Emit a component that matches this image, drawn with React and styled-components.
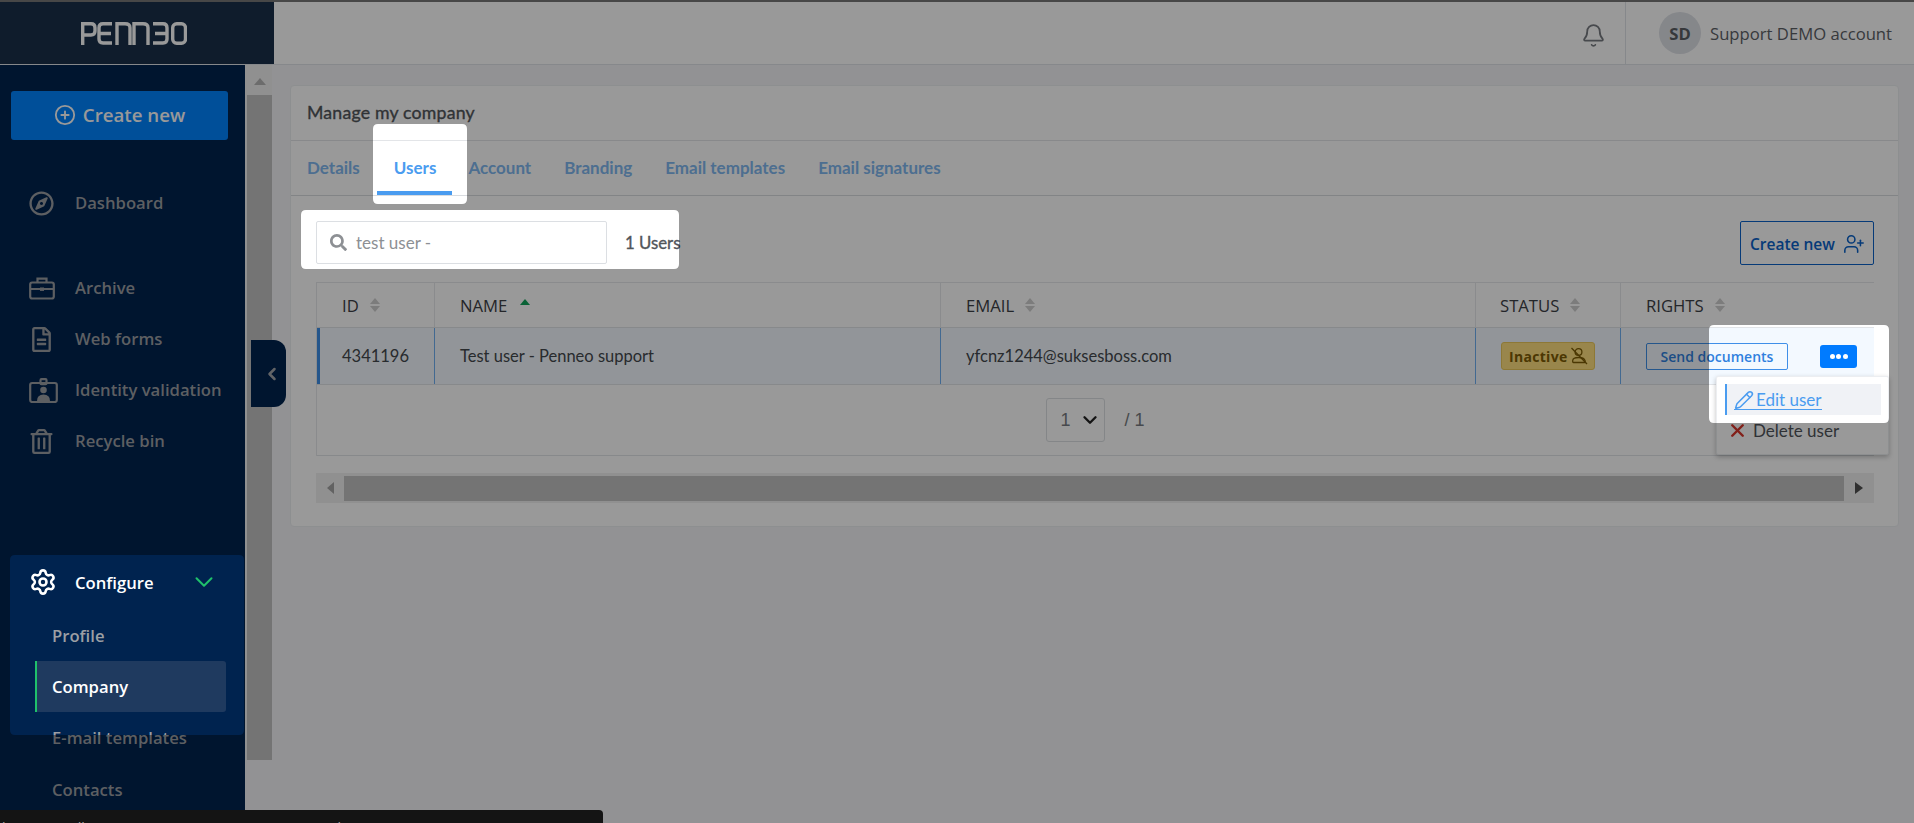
import React from 'react';
import styled, { createGlobalStyle } from 'styled-components';
import {
  Bell, Settings, ChevronDown, ChevronLeft, CirclePlus, UserPlus, Pencil, X,
} from 'lucide-react';
import { FaRegCompass, FaRegFileAlt, FaRegTrashAlt, FaSearch } from 'react-icons/fa';

const GlobalStyle = createGlobalStyle`
  html, body { margin: 0; padding: 0; height: 100%; overflow: hidden; }
  body { font-family: 'Open Sans', 'Liberation Sans', sans-serif; background: #f3f4f7; }
  * { box-sizing: border-box; }
`;

const LATO = `'Lato', 'Liberation Sans', sans-serif`;

// holes of the guided tour overlay: x, y, w, h
const HOLES = [
  [373, 124, 94, 80],
  [301, 210, 378, 59],
  [1709, 325, 180, 98],
  [10, 555, 234, 180],
];

const holePath = ([x, y, w, h], r = 5) =>
  `M${x + r} ${y}H${x + w - r}Q${x + w} ${y} ${x + w} ${y + r}V${y + h - r}Q${x + w} ${y + h} ${x + w - r} ${y + h}H${x + r}Q${x} ${y + h} ${x} ${y + h - r}V${y + r}Q${x} ${y} ${x + r} ${y}Z`;

const Page = styled.div`
  position: relative;
  width: 1914px;
  height: 823px;
  overflow: hidden;
  display: flex;
  flex-direction: column;
  border-top: 2px solid #474747;
`;

const Dim = styled.div`
  position: absolute;
  inset: -2px 0 0 0;
  background: rgba(0, 0, 0, 0.4);
  clip-path: path(evenodd, 'M0 0H1914V823H0Z ${HOLES.map((h) => holePath(h)).join(' ')}');
  z-index: 10;
`;

const Header = styled.header`
  flex: 0 0 63px;
  display: flex;
  align-items: stretch;
  background: #fff;
  border-bottom: 1px solid #dfe3e8;
`;

const LogoCell = styled.div`
  width: 274px;
  display: flex;
  align-items: center;
  justify-content: center;
  padding-right: 6px;
  background: #19304a;
`;

const HeaderSpacer = styled.div`
  flex: 1;
`;

const BellCell = styled.div`
  width: 64px;
  display: flex;
  align-items: center;
  justify-content: center;
  color: #777b80;
  padding-top: 4px;
  border-right: 1px solid #dfe3e8;
`;

const Account = styled.div`
  display: flex;
  align-items: center;
  gap: 9px;
  width: 288px;
  padding-left: 33px;
  font-size: 16.66px;
  color: #5d6166;
`;

const Avatar = styled.div`
  width: 42px;
  height: 42px;
  border-radius: 50%;
  background: #dee1e7;
  display: flex;
  align-items: center;
  justify-content: center;
  font-weight: 700;
  font-size: 16.66px;
  color: #5a5e63;
`;

const Body = styled.div`
  flex: 1;
  display: flex;
  min-height: 0;
`;

const Sidebar = styled.nav`
  width: 245px;
  flex: none;
  background: #00234f;
  padding-top: 26px;
  overflow: hidden;
`;

const CreateButton = styled.button`
  display: flex;
  align-items: center;
  justify-content: center;
  gap: 7px;
  width: 217px;
  height: 49px;
  margin-left: 11px;
  padding: 0 0 2px;
  border: 0;
  border-radius: 3px;
  background: #0084ff;
  color: #fff;
  font: 600 18.7px 'Open Sans', sans-serif;
`;

const NavGroup = styled.div`
  margin-top: ${(p) => p.$top}px;
`;

const NavItem = styled.div`
  display: flex;
  align-items: center;
  height: 51px;
  padding: 0 0 2px 29px;
  font-size: 16.66px;
  font-weight: 600;
  color: #9c9fa4;
`;

const NavIcon = styled.span`
  width: 46px;
  flex: none;
  display: flex;
  align-items: center;
  padding-top: 1px;
`;

const ConfigureBox = styled.div`
  margin: 88px 0 0 10px;
  padding-top: 3px;
`;

const ConfigureHead = styled.div`
  display: flex;
  align-items: center;
  height: 52px;
  padding: 0 0 4px 19px;
  font-size: 16.66px;
  font-weight: 600;
  color: #fff;
`;

const ConfigureIcon = styled.span`
  width: 46px;
  display: flex;
  align-items: center;
`;

const ConfigureChevron = styled.span`
  display: flex;
  margin-left: 35px;
  color: #1fc16b;
`;

const SubItem = styled.div`
  display: flex;
  align-items: center;
  height: ${(p) => p.$height || 52}px;
  margin-left: ${(p) => (p.$outer ? 35 : 25)}px;
  width: 191px;
  padding: 0 0 ${(p) => (p.$outer ? 2 : 0)}px ${(p) => (p.$active ? 15 : 17)}px;
  font-size: 16.66px;
  font-weight: 600;
  color: ${(p) => (p.$active ? '#fff' : '#9c9fa4')};
  background: ${(p) => (p.$active ? '#1f3a5f' : 'transparent')};
  border-left: ${(p) => (p.$active ? '2px solid #1fc16b' : '0')};
  border-radius: 0 3px 3px 0;
`;

const Main = styled.main`
  flex: 1;
  display: flex;
  min-width: 0;
  background: #f3f4f7;
`;

const VScroll = styled.div`
  width: 27px;
  flex: none;
  height: 695px;
  padding-left: 2px;
  display: flex;
  flex-direction: column;
  background: #f1f1f1;
`;

const VArrow = styled.div`
  height: 30px;
  display: flex;
  justify-content: center;
  align-items: flex-start;
  padding-top: 13px;
  &::before {
    content: '';
    border: 6.5px solid transparent;
    border-top: 0;
    border-bottom: 7px solid #b5b5b5;
  }
`;

const VThumb = styled.div`
  flex: 1;
  background: #c1c1c1;
`;

const Content = styled.div`
  flex: 1;
  min-width: 0;
  padding: 20px 15px 0 18px;
`;

const Card = styled.section`
  height: 442px;
  background: #fff;
  border: 1px solid #eceef1;
  border-radius: 4px;
`;

const CardTitle = styled.div`
  height: 55px;
  padding: 0 16px 2px;
  display: flex;
  align-items: center;
  border-bottom: 1px solid #e3e5e8;
  font: 400 17.7px ${LATO};
  letter-spacing: 0.2px;
  -webkit-text-stroke: 0.35px #51555a;
  color: #51555a;
`;

const Tabs = styled.div`
  display: flex;
  height: 55px;
  padding-left: 16px;
  border-bottom: 1px solid #d9dce0;
`;

const Tab = styled.div`
  position: relative;
  display: flex;
  align-items: center;
  padding-bottom: 2px;
  margin-right: ${(p) => p.$gap}px;
  font: 700 17px ${LATO};
  color: ${(p) => (p.$active ? '#4a9cf0' : '#80b8f0')};
  ${(p) => p.$active && `
    &::after {
      content: '';
      position: absolute;
      left: -17px;
      right: -16px;
      bottom: 0;
      height: 4px;
      background: #4a9cf0;
    }
  `}
`;

const Toolbar = styled.div`
  display: flex;
  align-items: flex-start;
  height: 44px;
  margin: 25px 24px 0 25px;
`;

const SearchBox = styled.div`
  display: flex;
  align-items: center;
  gap: 9px;
  width: 291px;
  height: 43px;
  padding-left: 13px;
  border: 1px solid #dcdfe3;
  border-radius: 2px;
  font: 400 17px ${LATO};
  color: #8d9094;
`;

const SearchGlyph = styled(FaSearch)`
  color: #8d9094;
`;

const Count = styled.div`
  margin-left: 18px;
  line-height: 43px;
  font: 400 16.8px/43px ${LATO};
  -webkit-text-stroke: 0.35px #51555a;
  color: #51555a;
`;

const CreateUser = styled.button`
  display: flex;
  align-items: center;
  gap: 8px;
  margin-left: auto;
  width: 134px;
  height: 44px;
  padding: 1px 0 0 9px;
  background: #fff;
  border: 1px solid #0a62c9;
  border-radius: 2px;
  color: #0a62c9;
  font: 600 15.5px 'Open Sans', sans-serif;
`;

const Table = styled.div`
  margin: 17px 24px 0 25px;
  border: 1px solid #e6e8eb;
  border-right: 0;
  border-bottom: 0;
`;

const Row = styled.div`
  display: grid;
  grid-template-columns: 118px 506px 535px 145px 1fr;
  height: ${(p) => p.$height}px;
  background: ${(p) => p.$bg || 'transparent'};
  border-bottom: 1px solid #e1e4e8;
`;

const HeadCell = styled.div`
  display: flex;
  align-items: center;
  gap: 11px;
  padding-left: ${(p) => p.$pad || 25}px;
  border-right: ${(p) => (p.$last ? 0 : '1px solid #e6e8eb')};
  font: 400 16.66px 'Open Sans', sans-serif;
  color: #3c4045;
`;

const Sort = styled.span`
  display: flex;
  flex-direction: column;
  gap: 2px;
  &::before, &::after {
    content: '';
    border-left: 5px solid transparent;
    border-right: 5px solid transparent;
  }
  &::before { border-bottom: 6px solid #cfcfcf; }
  &::after { border-top: 6px solid #cfcfcf; }
`;

const SortAsc = styled.span`
  align-self: flex-start;
  margin-top: 16px;
  margin-left: 2px;
  border-left: 5px solid transparent;
  border-right: 5px solid transparent;
  border-bottom: 6px solid #12a35a;
`;

const Cell = styled.div`
  display: flex;
  align-items: center;
  padding-left: ${(p) => p.$pad || 25}px;
  border-left: ${(p) => p.$edge || 0}px solid #3f8fe8;
  border-right: ${(p) => (p.$last ? 0 : '1px solid #6fb0f2')};
  font: 400 16.5px ${LATO};
  color: #44484d;
  min-width: 0;
`;

const Badge = styled.span`
  display: flex;
  align-items: center;
  gap: 3px;
  width: 94px;
  height: 28px;
  padding-left: 7px;
  background: #ffe07f;
  border: 1px solid #ecc95a;
  border-radius: 3px;
  color: #7d5c04;
  font: 700 14px 'Open Sans', sans-serif;
  letter-spacing: 0.3px;
`;

const SendButton = styled.button`
  width: 142px;
  height: 27px;
  padding: 0;
  background: transparent;
  border: 1px solid #3f8fe8;
  border-radius: 2px;
  color: #2f80de;
  font: 600 14px 'Open Sans', sans-serif;
`;

const MoreButton = styled.button`
  display: flex;
  align-items: center;
  justify-content: center;
  gap: 1.5px;
  width: 37px;
  height: 23px;
  margin-left: 32px;
  padding: 0;
  background: #007bff;
  border: 0;
  border-radius: 3px;
`;

const Dot = styled.i`
  width: 5px;
  height: 5px;
  border-radius: 50%;
  background: #fff;
`;

const TableFooter = styled.div`
  display: flex;
  align-items: center;
  justify-content: center;
  gap: 19px;
  height: 71px;
  padding-left: 1px;
  border-bottom: 1px solid #e1e4e8;
  border-right: 1px solid #e6e8eb;
  font: 400 18px 'Liberation Sans', sans-serif;
  color: #777b80;
`;

const PageSelect = styled.div`
  display: flex;
  align-items: center;
  justify-content: space-between;
  width: 59px;
  height: 44px;
  padding: 0 3px 0 13px;
  border: 1px solid #dcdfe3;
  border-radius: 3px;
`;

const HScroll = styled.div`
  display: flex;
  align-items: center;
  height: 30px;
  margin: 17px 24px 0 25px;
  background: #f1f1f1;
`;

const HArrow = styled.div`
  width: ${(p) => p.$width}px;
  flex: none;
  display: flex;
  justify-content: center;
  &::before {
    content: '';
    border: 6.5px solid transparent;
    ${(p) => (p.$left
    ? 'border-left: 0; border-right: 7px solid #a3a3a3;'
    : 'border-right: 0; border-left: 8px solid #505050;')}
  }
`;

const HThumb = styled.div`
  flex: 1;
  height: 25px;
  background: #c1c1c1;
`;

// ---- things lying over the page

const CollapseTab = styled.div`
  position: absolute;
  left: 251px;
  top: 338px;
  width: 35px;
  height: 67px;
  padding-left: 7px;
  display: flex;
  align-items: center;
  justify-content: center;
  background: #00234f;
  border-radius: 0 12px 12px 0;
  color: #a4a7ab;
`;

const RowMenu = styled.div`
  position: absolute;
  left: 1716px;
  top: 374px;
  width: 173px;
  height: 79px;
  padding: 7px 7px 0 8px;
  background: #fff;
  border: 1px solid #eceef1;
  border-radius: 2px;
  box-shadow: 0 2px 5px rgba(0, 0, 0, 0.25);
  font: 400 17px ${LATO};
`;

const EditItem = styled.a`
  display: flex;
  align-items: center;
  height: 31px;
  padding: 1px 0 0 7px;
  background: #f0f2f6;
  border-left: 2px solid #4a9cf0;
  color: #4a9cf0;
`;

const EditLabel = styled.span`
  display: flex;
  align-items: center;
  gap: 2px;
  height: 19px;
  border-bottom: 1px solid #4a9cf0;
`;

const DeleteItem = styled.div`
  display: flex;
  align-items: center;
  gap: 5px;
  height: 31px;
  padding-left: 2px;
  color: #50545a;
`;

const StatusBubble = styled.div`
  position: absolute;
  left: 0;
  top: 808px;
  width: 603px;
  height: 20px;
  padding: 8px 0 0 2px;
  background: #141414;
  border-radius: 0 4px 0 0;
  z-index: 20;
  color: #a8a8a8;
  font: 400 14px 'Open Sans', sans-serif;
  white-space: nowrap;
  overflow: hidden;
`;

const PenneoLogo = () => (
  <svg width="106" height="23" viewBox="0 0 106 23" fill="none" stroke="#fff" strokeWidth="3.4">
    <path d="M1.7 23V1.7H10Q14 1.7 14 5.7V9Q14 13 10 13H1.7" />
    <path d="M31 1.7H22Q18 1.7 18 5.7V17Q18 21 22 21H31M18 11.5H30" />
    <path d="M36 23V1.7H44Q49 1.7 49 5.7V23" />
    <path d="M53 23V1.7H62Q67 1.7 67 5.7V23" />
    <path d="M72 1.7H82Q86 1.7 86 5.7V17Q86 21 82 21H72M74 11.5H85" />
    <rect x="91.7" y="1.7" width="12.8" height="19.5" rx="4" />
  </svg>
);

const IdCardIcon = () => (
  <svg width="29" height="25" viewBox="0 0 29 25" fill="none" stroke="currentColor" strokeWidth="2.2">
    <rect x="1.2" y="5" width="26.6" height="19" rx="2" />
    <rect x="11.5" y="1.2" width="6" height="5" rx="1" />
    <circle cx="14.5" cy="12" r="2.2" fill="currentColor" />
    <path d="M8 23Q8 16.5 14.5 16.5T21 23Z" fill="currentColor" stroke="none" />
  </svg>
);

const BriefcaseIcon = () => (
  <svg width="26" height="23" viewBox="0 0 26 23" fill="none" stroke="currentColor" strokeWidth="2.2">
    <rect x="1.2" y="5.5" width="23.6" height="16" rx="2" />
    <path d="M8.5 5.5V1.6H17.5V5.5M1.2 12H24.8" />
    <rect x="11" y="10.5" width="4" height="3.4" fill="currentColor" stroke="none" />
  </svg>
);

const UserOffIcon = () => (
  <svg width="18" height="18" viewBox="0 0 18 18" fill="none" stroke="currentColor" strokeWidth="1.3">
    <circle cx="8.5" cy="5" r="3.4" />
    <path d="M3.5 15.5H14.5Q15.5 15.5 15 13.5Q14 10.5 8.5 10.5Q3 10.5 2.7 13.5Q2.5 15.5 3.5 15.5Z" />
    <path d="M1.5 1L17 17" />
  </svg>
);

const NAV_TOP = [{ label: 'Dashboard', icon: <FaRegCompass size={25} /> }];
const NAV_MAIN = [
  { label: 'Archive', icon: <BriefcaseIcon /> },
  { label: 'Web forms', icon: <FaRegFileAlt size={25} /> },
  { label: 'Identity validation', icon: <IdCardIcon /> },
  { label: 'Recycle bin', icon: <FaRegTrashAlt size={25} /> },
];

const App = () => (
  <Page>
    <GlobalStyle />
    <Header>
      <LogoCell><PenneoLogo /></LogoCell>
      <HeaderSpacer />
      <BellCell><Bell size={25} strokeWidth={1.7} /></BellCell>
      <Account>
        <Avatar>SD</Avatar>
        Support DEMO account
      </Account>
    </Header>
    <Body>
      <Sidebar>
        <CreateButton><CirclePlus size={22} strokeWidth={2} />Create new</CreateButton>
        <NavGroup $top={38}>
          {NAV_TOP.map((n) => (
            <NavItem key={n.label}><NavIcon>{n.icon}</NavIcon>{n.label}</NavItem>
          ))}
        </NavGroup>
        <NavGroup $top={34}>
          {NAV_MAIN.map((n) => (
            <NavItem key={n.label}><NavIcon>{n.icon}</NavIcon>{n.label}</NavItem>
          ))}
        </NavGroup>
        <ConfigureBox>
          <ConfigureHead>
            <ConfigureIcon><Settings size={28} strokeWidth={2.2} /></ConfigureIcon>
            Configure
            <ConfigureChevron><ChevronDown size={30} strokeWidth={1.6} /></ConfigureChevron>
          </ConfigureHead>
          <SubItem $height={51}>Profile</SubItem>
          <SubItem $height={51} $active>Company</SubItem>
        </ConfigureBox>
        <SubItem $outer>E-mail templates</SubItem>
        <SubItem $outer>Contacts</SubItem>
      </Sidebar>
      <Main>
        <VScroll>
          <VArrow />
          <VThumb />
        </VScroll>
        <Content>
          <Card>
            <CardTitle>Manage my company</CardTitle>
            <Tabs>
              <Tab $gap={34}>Details</Tab>
              <Tab $gap={32} $active>Users</Tab>
              <Tab $gap={33}>Account</Tab>
              <Tab $gap={33}>Branding</Tab>
              <Tab $gap={33}>Email templates</Tab>
              <Tab $gap={0}>Email signatures</Tab>
            </Tabs>
            <Toolbar>
              <SearchBox><SearchGlyph size={17} />test user -</SearchBox>
              <Count>1 Users</Count>
              <CreateUser>Create new<UserPlus size={22} strokeWidth={1.7} /></CreateUser>
            </Toolbar>
            <Table>
              <Row $height={45}>
                <HeadCell>ID<Sort /></HeadCell>
                <HeadCell>NAME<SortAsc /></HeadCell>
                <HeadCell>EMAIL<Sort /></HeadCell>
                <HeadCell $pad={24}>STATUS<Sort /></HeadCell>
                <HeadCell $last>RIGHTS<Sort /></HeadCell>
              </Row>
              <Row $height={57} $bg="#f3f9ff">
                <Cell $edge={3} $pad={22}>4341196</Cell>
                <Cell>Test user - Penneo support</Cell>
                <Cell>yfcnz1244@suksesboss.com</Cell>
                <Cell><Badge>Inactive<UserOffIcon /></Badge></Cell>
                <Cell $last>
                  <SendButton>Send documents</SendButton>
                  <MoreButton><Dot /><Dot /><Dot /></MoreButton>
                </Cell>
              </Row>
              <TableFooter>
                <PageSelect>1<ChevronDown size={22} strokeWidth={2.6} color="#222" /></PageSelect>
                / 1
              </TableFooter>
            </Table>
            <HScroll>
              <HArrow $left $width={28} />
              <HThumb />
              <HArrow $width={30} />
            </HScroll>
          </Card>
        </Content>
      </Main>
    </Body>
    <CollapseTab><ChevronLeft size={20} strokeWidth={3} /></CollapseTab>
    <RowMenu>
      <EditItem><EditLabel><Pencil size={20} strokeWidth={1.8} />Edit user</EditLabel></EditItem>
      <DeleteItem><X size={21} strokeWidth={2.8} color="#d9362b" />Delete user</DeleteItem>
    </RowMenu>
    <Dim />
    <StatusBubble>https://sandbox.penneo.com/company/users?search=test+user+-&amp;page=1&amp;sort=name</StatusBubble>
  </Page>
);

export default App;
